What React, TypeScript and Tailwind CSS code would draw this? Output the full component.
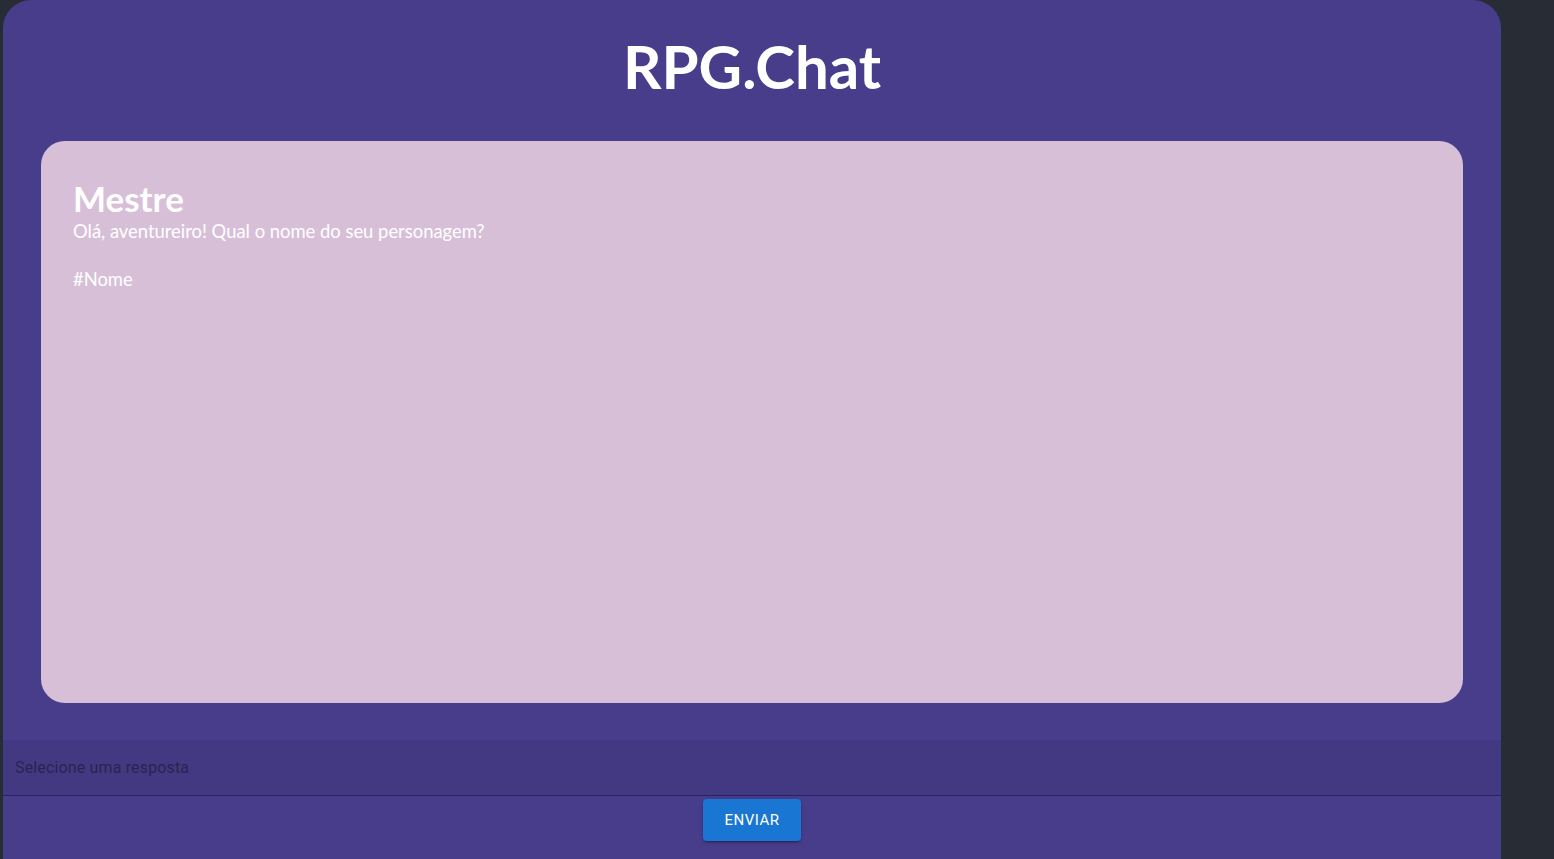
import React from 'react';

const App: React.FC = () => {
  return (
    <div className="min-h-screen w-full bg-[#282c34] overflow-hidden">
      <div className="ml-[3px] w-[1498px] h-[900px] rounded-t-[28px] bg-[#483d8b] flex flex-col">
        {/* Header */}
        <div className="h-[141px] flex items-start justify-center">
          <h1 className="mt-[30px] text-[60px] leading-[72px] font-bold text-white font-['Lato',sans-serif]">
            RPG.Chat
          </h1>
        </div>

        {/* Chat card */}
        <div className="mx-[38px] h-[562px] rounded-[24px] bg-[#d8bfd8] px-8 pt-[36px] text-white font-['Lato',sans-serif]">
          <h2 className="text-[35px] leading-[42px] font-bold">Mestre</h2>
          <p className="text-[18.4px] leading-[24px] whitespace-pre-line">
            {'Olá, aventureiro! Qual o nome do seu personagem?\n\n#Nome'}
          </p>
        </div>

        {/* Answer select */}
        <div className="mt-[37px] h-[56px] bg-black/[0.06] border-b border-[#2b2266] flex items-center px-3 font-['Roboto',sans-serif]">
          <span className="text-[16px] tracking-[0.15px] text-[#2a2352]">Selecione uma resposta</span>
        </div>

        {/* Send button */}
        <div className="flex justify-center mt-[3px]">
          <button className="h-[42px] w-[98px] rounded-[4px] bg-[#1976d2] text-white text-[15px] font-normal tracking-[0.46px] font-['Roboto',sans-serif] shadow-[0_3px_1px_-2px_rgba(0,0,0,0.2),0_2px_2px_0_rgba(0,0,0,0.14),0_1px_5px_0_rgba(0,0,0,0.12)]">
            ENVIAR
          </button>
        </div>
      </div>
    </div>
  );
};

export default App;
